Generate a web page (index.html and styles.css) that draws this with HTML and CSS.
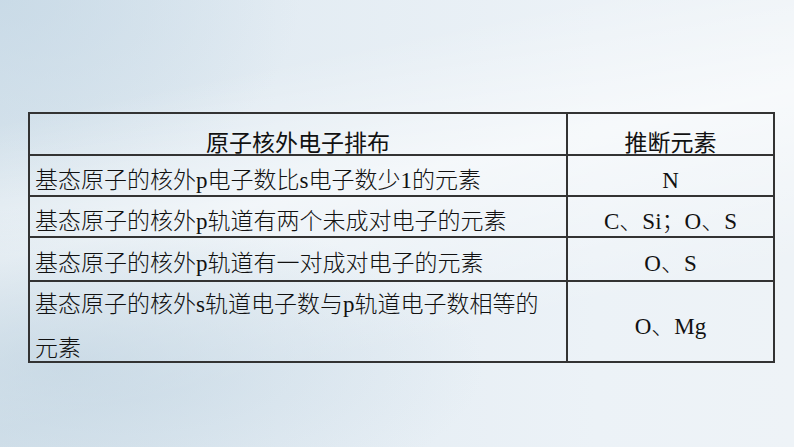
FILE: index.html
```html
<!DOCTYPE html>
<html lang="zh-CN">
<head>
<meta charset="utf-8">
<title>原子核外电子排布</title>
<link rel="stylesheet" href="styles.css">
</head>
<body>
<main class="slide">
  <table class="grid">
    <colgroup>
      <col class="c1">
      <col class="c2">
    </colgroup>
    <tr class="r-head">
      <th>原子核外电子排布</th>
      <th>推断元素</th>
    </tr>
    <tr class="r1">
      <td class="desc">基态原子的核外p电子数比s电子数少1的元素</td>
      <td class="elem">N</td>
    </tr>
    <tr class="r2">
      <td class="desc">基态原子的核外p轨道有两个未成对电子的元素</td>
      <td class="elem">C、Si；O、S</td>
    </tr>
    <tr class="r3">
      <td class="desc">基态原子的核外p轨道有一对成对电子的元素</td>
      <td class="elem">O、S</td>
    </tr>
    <tr class="r4">
      <td class="desc tall"><div class="two">基态原子的核外s轨道电子数与p轨道电子数相等的<br>元素</div></td>
      <td class="elem">O、Mg</td>
    </tr>
  </table>
</main>
</body>
</html>
```
FILE: styles.css
```css
html, body {
  margin: 0;
  padding: 0;
}
body {
  width: 794px;
  height: 447px;
  overflow: hidden;
  background:
    radial-gradient(ellipse 420px 160px at 8% 82%, rgba(186, 207, 222, 0.55), rgba(186, 207, 222, 0) 100%),
    linear-gradient(168deg, rgba(255, 255, 255, 0) 20%, rgba(255, 255, 255, 0.55) 42%, rgba(255, 255, 255, 0) 70%),
    radial-gradient(ellipse 300px 200px at 0% 0%, rgba(196, 215, 229, 0.7), rgba(196, 215, 229, 0) 100%),
    linear-gradient(to right, #d6e3ec 0%, #e3ecf3 35%, #ecf2f7 75%, #eef3f7 100%);
}
.slide {
  padding: 112px 0 0 28px;
}
.grid {
  width: 745px;
  border-collapse: collapse;
  table-layout: fixed;
  color: #111;
  font-size: 23px;
}
.c1 { width: 538px; }
.c2 { width: 207px; }
.grid th, .grid td {
  border: 2px solid #333;
  padding: 10px 5px 0;
  line-height: 26px;
  vertical-align: middle;
}
.grid th {
  font-family: "Noto Sans CJK SC", sans-serif;
  font-weight: 400;
  text-align: center;
  padding-top: 14px;
}
.grid td {
  font-family: "Liberation Serif", "Noto Sans CJK SC", serif;
  font-weight: 300;
}
.r-head { height: 42px; }
.r1 { height: 41px; }
.r2 { height: 41px; }
.r3 { height: 44px; }
.r4 { height: 81px; }
.desc { text-align: left; }
.elem { text-align: center; }
.grid td.tall {
  padding-top: 1px;
  vertical-align: top;
}
.two {
  height: 78px;
  line-height: 44px;
}
```
